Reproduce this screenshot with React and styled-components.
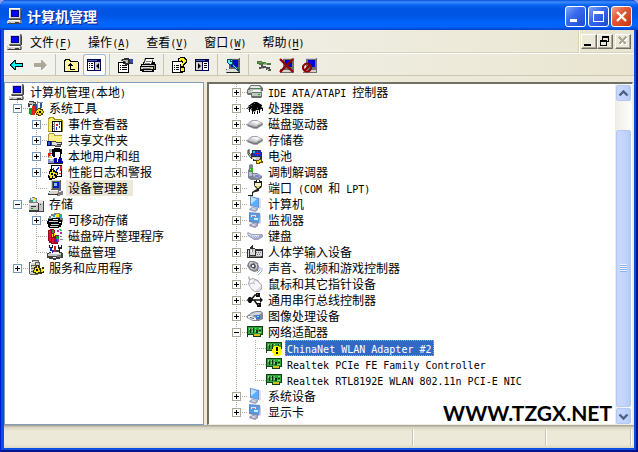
import styled, { createGlobalStyle, css } from "styled-components";

// every glyph is a list of [colour, path, stroke width?] layers on a 16x16 grid
const glyphs = {
  computer: [
    ["#6b6b6b", "M2 0h12l1 1v10h-1v1H3l-1-1z"],
    ["#d6d3ce", "M2 0h11v10H2z"],
    ["#fff", "M2 0h11v1H3v9H2z"],
    ["#000080", "M4 2h8v7H4z"],
    ["#0000ff", "M5 3h6v5H5z"],
    ["#808080", "M1 12h13l1 1v2l-1 1H0v-3z"],
    ["#d6d3ce", "M1 12h12v1H1zM0 13h13v2H0z"],
    ["#fff", "M1 12h12v1H1z"],
    ["#a0a0a0", "M2 14h2v1H2z"],
    ["#404040", "M8 14h4v1H8zM3 11h11v1H3zM14 2h1v9h-1zM1 15h13v1H1z"],
  ],
  back: [
    ["#000", "M1 7h1V6h1V5h1V4h1V3h2v3h7v4H7v3H5v-1H4v-1H3v-1H2V9H1z"],
    ["#00ffff", "M2 8l4-4v3h7v2H6v3z"],
  ],
  forward: [
    ["#fff", "M3 7h7V4h1l5 5-5 5h-1v-3H3z"],
    ["#aca899", "M2 6h7V3h1l5 5-5 5H9v-3H2z"],
  ],
  upFolder: [
    ["#000", "M1 3h1V2h5v1h1v1h7v1h1v10H1z"],
    ["#fff68f", "M2 4h1V3h3v1h1v1h8v9H2z"],
    ["#fffde0", "M3 6h1v1H3zM5 5h1v1H5zM12 6h1v1h-1zM14 7h1v1h-1zM12 9h1v1h-1zM3 9h1v1H3zM3 12h1v1H3zM13 12h1v1h-1z"],
    ["#000", "M7 6h1v1h1v1h1v1H8v3h4v1H7V9H5V8h1V7h1z"],
  ],
  panes: [
    ["#000050", "M1 2h14v12H1z"],
    ["#4060c0", "M2 3h9v1H2z"],
    ["#d6d3ce", "M9 5h5v8H9z"],
    ["#fff", "M2 5h6v8H2z"],
    ["#000", "M3 6h1v1H3zM5 6h2v1H5zM3 8h1v1H3zM5 8h2v1H5zM3 10h1v1H3zM5 10h2v1H5zM13 6v6l-3-3z"],
  ],
  panesRight: [
    ["#000050", "M1 2h14v12H1z"],
    ["#4060c0", "M2 3h9v1H2z"],
    ["#d6d3ce", "M2 5h6v8H2z"],
    ["#fff", "M9 5h5v8H9z"],
    ["#000", "M4 6v6l3-3zM10 6h3v1h-3zM10 8h3v1h-3zM10 10h3v1h-3z"],
  ],
  properties: [
    ["#000", "M1 5h11v11H1z"],
    ["#fff", "M2 6h9v9H2z"],
    ["#000", "M3 8h1v1H3zM5 8h5v1H5zM3 10h1v1H3zM5 10h5v1H5zM3 12h1v1H3zM5 12h5v1H5z"],
    ["#303030", "M5 2h2V1h5v1h4v5h-5v1H8V7H6V6h2V5H6V4H4z"],
    ["#bdbdbd", "M6 3h5v1H6zM8 4h3v2H9z"],
    ["#3050a0", "M13 2h3v4h-3z"],
  ],
  printer: [
    ["#000", "M5 1h9v1h-1v3h2v2h1v6h-2v2H2v-1H0V9h1V7h2V5h1z"],
    ["#fff", "M6 2h7l-2 5H4z"],
    ["#808080", "M6 4h5v1H6zM5 6h5v1H5z"],
    ["#d6d3ce", "M2 8h12v1H2zM1 10h12v2H1zM4 13h8v1H4z"],
    ["#808080", "M14 8h1v4h-1zM3 11h8v1H3z"],
    ["#e0d000", "M10 10h2v1h-2z"],
  ],
  help: [
    ["#000", "M1 4h11v12H1z"],
    ["#fff", "M2 5h9v10H2z"],
    ["#000", "M3 8h1v1H3zM5 8h3v1H5zM3 10h1v1H3zM5 10h3v1H5zM3 12h1v1H3zM5 12h3v1H5z"],
    ["#000", "M7 1h2V0h5v1h1v1h1v4h-1v1h-1v1h-1v2h-4V7h2V5h1V4h-1v1H7z"],
    ["#ffef20", "M8 2h1V1h4v1h1v1h1v2h-1v1h-1v1h-1v2h-2V7h1V6h1V4h-1V3h-1v1H8z"],
    ["#000", "M9 10h5v5H9z"],
    ["#ffef20", "M10 11h3v3h-3z"],
  ],
  scan: [
    ["#606060", "M4 1h11v11H4zM1 12h14v4H1z"],
    ["#e0ded8", "M4 1h10v1H4zM2 12h11v1H2zM1 13h12v2H1z"],
    ["#0000d8", "M6 3h7v7H6z"],
    ["#005060", "M2 2h5v1h1v4h1v1h1v1h1v1h1v1h1v1h1v2h-2v-1h-1v-1h-1v-1h-1v-1H8V8H4V7H3V6H2z"],
    ["#60e8ff", "M3 3h2v2h2v2H4V6H3zM8 8h1v1h1v1h1v1h1v1h-1v-1h-1v-1H9V9H8zM6 3h1v1H6z"],
    ["#202020", "M2 15h13v1H2z"],
  ],
  plug: [
    ["#4c7a3c", "M1 4h5v1h4v1h5v2h-4V7H7v1H3V7H1z"],
    ["#78a060", "M3 5h3v1H3zM8 6h3v1H8z"],
    ["#505050", "M5 8h2v1h3v1h4v2h-3v-1H7v-1H5zM10 11h3v1h2v2h-3v-1h-2zM3 10h5v2H3z"],
    ["#b0b0b0", "M5 11h3v1H5zM7 7h4v1H7zM11 12h2v1h-2z"],
  ],
  uninstall: [
    ["#707070", "M4 1h11v11H4zM1 12h14v4H1z"],
    ["#d6d3ce", "M4 1h10v1H4zM1 13h13v2H1z"],
    ["#0000d0", "M6 3h7v7H6z"],
    ["#900000", "M1 2l13 13M14 2L1 15", 2.4],
  ],
  disable: [
    ["#707070", "M4 1h11v11H4zM1 12h14v4H1z"],
    ["#d6d3ce", "M4 1h10v1H4zM1 13h13v2H1z"],
    ["#0000d0", "M6 3h7v7H6z"],
    ["#900000", "M5 6.500a4 4 0 1 0 .1 0M2.500 13.500l6-6", 2.2],
  ],
  tools: [
    ["#404040", "M0 3h1V1h5v1h2v3H7v2H4V5H2v2H0z"],
    ["#c0c0c0", "M1 2h4v1h2v1H5v2H4V4H1z"],
    ["#00a030", "M1 8h3v7H2v-1H1z"],
    ["#e02020", "M4 6h3v9H4z"],
    ["#3050a0", "M7 4h2v8H7zM12 3h2v5h-2z"],
    ["#909090", "M9 1h1v8H9zM10 2h5v1h-5z"],
    ["#504800", "M8 9h2V8h3v1h2v2h1v2h-1v2h-2v1h-3v-1H8v-2H7v-2h1z"],
    ["#f0d820", "M9 10h1V9h2v1h2v1h1v2h-2v2h-2v-1H9v-1H8v-2h1z"],
    ["#000", "M11 11h2v2h-2zM9 12h1v1H9z"],
  ],
  events: [
    ["#a09020", "M1 2h1V1h5v1h1v1h7v1h1v12H1z"],
    ["#ffef70", "M2 3h1V2h3v1h1v1h7v1H5v10H2z"],
    ["#c0b030", "M1 3h1v12H1z"],
    ["#000", "M5 5h10v11H5z"],
    ["#fff", "M6 6h8v9H6z"],
    ["#808080", "M7 6h1v9H7zM6 8h1v1H6zM6 10h1v1H6zM6 12h1v1H6z"],
    ["#e02020", "M9 8h2v2H9zM12 6h1v3h-1z"],
    ["#0040e0", "M9 11h1v3H9zM12 10h1v2h-1z"],
  ],
  shared: [
    ["#a8a040", "M1 2h1V1h5v1h1v1h7v8H1z"],
    ["#ffef80", "M2 2h5v2h8v7H2z"],
    ["#fffbd0", "M3 5h1v1H3zM6 5h1v1H6zM9 5h1v1H9zM12 5h1v1h-1zM4 7h1v1H4zM8 7h1v1H8zM11 7h1v1h-1zM5 9h1v1H5z"],
    ["#000080", "M0 9h4v5H0z"],
    ["#2060c0", "M1 10h2v3H1z"],
    ["#404040", "M4 9h5v1h6v3h-1v2H8v-1H4z"],
    ["#e0e0e0", "M5 10h4v1h5v1h-4v1H5z"],
    ["#909090", "M8 13h5v1H8z"],
  ],
  users: [
    ["#a0a0a0", "M2 1h5v3H4v6H1V5h1z"],
    ["#000", "M5 1h2V0h6v1h2v5h-1v4h-2V9H6V8H5z"],
    ["#fff", "M8 4h5v5h-2v1H8z"],
    ["#d02020", "M1 5h4v1H3v3H1z"],
    ["#ffe000", "M2 8h3v2H2z"],
    ["#8090d0", "M1 11h6v4H1z"],
    ["#d0d0d0", "M3 11h3v2H3z"],
    ["#0000b0", "M7 10h3v1h2v-1h3v3h1v3H7z"],
    ["#fff", "M10 11h1v3h-1z"],
    ["#202020", "M1 15h15v1H1z"],
  ],
  logs: [
    ["#000", "M4 1h11v12H4z"],
    ["#fff", "M5 2h9v10H5z"],
    ["#0030e0", "M6 4h1v2h1v1h1V5h1V4h1V3h1v2h-1v1h-1v2H8v1H7V8H6z"],
    ["#e02020", "M13 2h2v3h-1v2h-1zM12 9h2v1h-2z"],
    ["#000", "M2 9V7h1V5h3v1h2v2h3v3h-1v3H8v1H5v1H2v-2H1v-3h1z"],
    ["#ffe020", "M3 8h2V6h1v2h2v1h2v2H8v3H6v-2H5v2H3v-2H2v-2h1z"],
    ["#000", "M4 9h2v2H4zM7 10h2v2H7z"],
  ],
  device: [
    ["#606060", "M4 0h10v10H4zM2 11h13v4H1v-2h1z"],
    ["#d6d3ce", "M4 0h9v1H4zM4 1h1v8H4zM3 11h11v1H3zM2 12h11v2H2z"],
    ["#0020d0", "M6 2h6v6H6z"],
    ["#90b8ff", "M7 3h3v3H7z"],
    ["#808080", "M11 10h3v1h2v4h-3v1h-3v-3h1z"],
    ["#fff", "M12 11h2v1h-2z"],
    ["#303030", "M1 14h10v1H1z"],
  ],
  storage: [
    ["#404040", "M1 6h9V5h6v11H1z"],
    ["#808080", "M2 2h2V1h3v1h2v2h1v3H1V4h1z"],
    ["#b8e8ff", "M3 2h4v1h1v3H3z"],
    ["#ffe000", "M5 2h2v2H5z"],
    ["#20b040", "M3 4h2v2H3z"],
    ["#e8e6e0", "M1 7h9v2H1zM9 4h6v2H9zM10 6h5v1h-5z"],
    ["#c8c8c8", "M1 9h9v5H1zM11 7h4v8h-4z"],
    ["#303030", "M3 10h5v1H3zM10 7h1v9h-1zM12 8h1v1h-1z"],
    ["#00a000", "M3 12h2v1H3z"],
  ],
  removable: [
    ["#808080", "M2 4h2V2h3V1h6v1h2v4h1v4h-3v4H2V9H1V6h1z"],
    ["#000", "M1 7h4V6h8v2h2v5h-1v2h-2v1H2v-1H1v-3H0V9h1z"],
    ["#d0f0ff", "M4 4h2V3h3v3H4z"],
    ["#ffe000", "M9 2h3v3H9z"],
    ["#00b0c0", "M12 3h2v3h-2zM6 3h2v2H6z"],
    ["#c8c8c8", "M2 9h9v1H2zM4 12h8v1H4zM3 14h8v1H3z"],
    ["#fff", "M6 7h5v1H6zM12 10h2v1h-2z"],
  ],
  defrag: [
    ["#a00020", "M1 2h2V1h4v1h1v5h4v7h-1v2H4v-1H2v-2H1z"],
    ["#e01030", "M2 3h2v10H2zM5 10h2v5H5z"],
    ["#20a030", "M5 2h2v3H5zM9 8h3v3H9z"],
    ["#ffe020", "M7 5h1v3H7zM5 6h1v3H5z"],
    ["#2030d0", "M4 5h1v3H4zM8 11h2v3H8z"],
    ["#c020c0", "M10 2h2v2h-2zM13 4h2v2h-2zM10 11h2v3h-2z"],
    ["#20c040", "M12 1h2v1h1v1h-2V2h-1z"],
    ["#808080", "M13 8h2v1h-2zM13 11h3v1h-3z"],
  ],
  diskMgmt: [
    ["#404040", "M2 8h3V6h8v2h2v1h1v5h-3v1H9v1H6v-1H2v-1H0V9h2z"],
    ["#c8c8c8", "M2 9h12v3H1v-2h1z"],
    ["#f4f4f4", "M4 8h8v2H4zM6 13h3v1H6z"],
    ["#808080", "M10 11h4v2h-4z"],
    ["#20a030", "M12 11h1v1h-1z"],
    ["#0030c0", "M3 3h2v3h1v3H5V7H3z"],
    ["#d02020", "M7 2h2v6H7z"],
    ["#202020", "M2 1h1v2h2V1h1v3H2zM11 1h1v2h2V1h1v4h-2v4h-1V5h-1z"],
  ],
  services: [
    ["#606060", "M1 2h3V0h7v2h1v12h-2v1H2v-1H1z"],
    ["#d6d3ce", "M2 3h5v11H2zM5 1h5v1H5zM8 3h3v4H8z"],
    ["#fff", "M3 2h4v1H3zM2 3h1v9H2z"],
    ["#606060", "M3 5h4v1H3zM3 8h4v1H3zM3 11h3v1H3z"],
    ["#00b020", "M3 6h1v1H3z"],
    ["#303000", "M6 7h2V5h3v1h1v2h2V7h2v2h-1v2h1v2h-2v1h-2v-1h-1v1H7v-1H5v-3h1z"],
    ["#ffe000", "M7 8h2V6h1v2h1v2h1v2h-2v1H8v-1H6v-2h1zM13 8h1v1h1v3h-2z"],
    ["#000", "M8 9h2v2H8z"],
  ],
  ide: [
    ["#687068", "M4 1h9l3 3v3h-1v6l-1 1H5l-1-1v-2H1l-1-1V6l3-4z"],
    ["#e8ece8", "M4 2h8l2 2H3z"],
    ["#bcc4bc", "M1 6h4v3H1zM3 5h11v1H3z"],
    ["#f0f4f0", "M6 6h7l2 2H4z"],
    ["#c0c8c0", "M5 9h9v3H5z"],
    ["#20a030", "M10 4h2v1h-2zM11 10h2v1h-2z"],
  ],
  cpu: [
    ["#000", "M7 2h3l5 3v1l-1 1 2 1v3h-1V9l-2 0v4h-1v-3h-1v4h-1v-4H9l-1 2v2H7v-2l-1-1v3H5v-4l-2-1v3H2v-4L0 9V8l2-1-1-1z"],
    ["#707070", "M2 6h1v1H2zM4 5h1v1H4zM7 3h1v1H7zM4 8h1v1H4zM10 8h1v1h-1z"],
    ["#a0a0a0", "M1 9h1v1H1zM4 10h1v1H4zM7 11h1v1H7zM10 10h1v1h-1zM13 9h1v1h-1z"],
  ],
  drive: [
    ["#a4a4a8", "M0 8l5-4h5l6 3v2l-6 4H7L0 10z"],
    ["#d4d4d8", "M1 8l5-3h4l5 2-6 3z"],
    ["#f6f6f8", "M4 6l3-1h3l3 1-3 2z"],
    ["#707078", "M1 9l6 2 3 0 5-3v1l-5 3H7l-6-2z"],
    ["#40a040", "M11 9h1v1h-1z"],
  ],
  battery: [
    ["#303030", "M1 2v4l3 4M2 1v4l4 5", 1],
    ["#303030", "M5 2h9v2h1v7h-2v2H6v-2H4V5h1z"],
    ["#c8c8c8", "M5 9h8v3H7v-1H5z"],
    ["#1030d0", "M6 3h8v5H6z"],
    ["#e01020", "M10 3h1v5h-1zM8 5h5v1H8z"],
    ["#00d0f0", "M6 3h2v2H6z"],
    ["#fff", "M6 10h3v1H6z"],
    ["#605000", "M9 12h3v-1h3v2h1v2h-3v1H9z"],
    ["#ffe820", "M10 13h2v-1h2v2h-2v1h-2z"],
  ],
  modem: [
    ["#7c8498", "M2 1l2-1 2 1v8h4l5 3v2l-3 2H4l-3-2V6l1-1z"],
    ["#b8c0d0", "M2 5h3v7H2zM6 10h4l4 2-4 2-4-2z"],
    ["#30b020", "M2 4h4v4H2z"],
    ["#a0ff80", "M3 5h1v1H3z"],
    ["#8080d8", "M8 11h4v2H8z"],
  ],
  port: [
    ["#202020", "M7 1h2V0h1v2h2V0h1v1h2v5l-1 2-2 1v2l-3 1-1 0-2 1v3H1v-1h4v-3l3-2 2-1V9L8 7 7 5z"],
    ["#f4f0d0", "M8 3h6v3H8z"],
    ["#e8d870", "M9 6h4l-1 2h-2z"],
  ],
  monitor: [
    ["#7090c8", "M3 0l9 2v10l-9-2z"],
    ["#58b0ff", "M4 1l7 2v8l-7-2z"],
    ["#b8e4ff", "M4 1l6 2-6 5z"],
    ["#d8dcee", "M12 2l2 1v9l-2 1z"],
    ["#a0a4bc", "M6 11l5 1v2l-3 2-6-2 1-2z"],
    ["#dce0f0", "M6 12l4 1-3 1-3-1z"],
  ],
  display: [
    ["#7088b8", "M2 0l11 1v9l-2 2-9-2z"],
    ["#48a0f0", "M3 1l9 1v7l-2 1-7-2z"],
    ["#d0ecff", "M4 3l5 0v2H4zM7 6h4v2H7z"],
    ["#d07080", "M5 4h3v1H5zM9 3h1v1H9z"],
    ["#c8ccdc", "M13 2l1 1v8l-2 1z"],
    ["#9498b0", "M6 11l5 1v2l-3 2-6-2 1-2z"],
    ["#dce0ec", "M6 12l4 1-3 1-3-1z"],
  ],
  keyboard: [
    ["#a0a4c8", "M0 5l1-1 4 2 10 0 1 1v2l-5 3H7L1 8z"],
    ["#dcdef0", "M1 5l4 2h9l-4 3H7L2 7z"],
    ["#9ca0c4", "M4 7h1v1H4zM6 8h1v1H6zM8 8h1v1H8zM10 8h1v1h-1zM7 9h1v1H7zM9 9h1v1H9zM12 7h1v1h-1z"],
  ],
  hid: [
    ["#303030", "M0 5h3V3h1V2h1V1h1v3h2v1h8v9H0z"],
    ["#d8d8d8", "M3 5h5v6H3zM1 6h1v7H1zM9 7h6v5H9z"],
    ["#fff", "M4 6h2v2H4z"],
    ["#808080", "M5 5h1v3H5zM9 8h1v1H9zM11 8h1v1h-1zM13 8h1v1h-1zM10 10h1v1h-1zM12 10h1v1h-1zM3 12h11v1H3z"],
  ],
  sound: [
    ["#808088", "M3 1h4l4 2 1 4-1 4-4 1-4-2-3-4 1-3z"],
    ["#d0d0d8", "M3 2h3l4 2 0 4-2 2-4-1-2-4z"],
    ["#505058", "M4 4l3-1 2 3-1 3-3-1-2-2z"],
    ["#f0f0f8", "M5 5h2v2H5z"],
    ["#a0a8f0", "M13 7l0 3-3 3M15 8v3l-4 4", 1],
  ],
  mouse: [
    ["#a8a8b0", "M2 0l1 3 3-1 5 2 4 5v4l-3 3H8l-4-3-3-5 1-4-1-3z"],
    ["#f6f6fa", "M3 4l3-1 4 2 4 4v3l-2 3H8l-4-3-2-4z"],
    ["#b8b8c0", "M8 4l-2 3-4 1M6 7l2 1", 1],
    ["#dcdce4", "M9 14l5-4v2l-2 3H9z"],
  ],
  usb: [
    ["#101010", "M3 8h10M4 8l4-5h3M7 8l3 4h2", 1.4],
    ["#101010", "M0 8l2-3h2l2 3-2 3H2zM9 1h4v4H9zM13 5l3 3-3 3zM10 11h4v4h-4z"],
    ["#808080", "M10 2h1v1h-1zM11 12h1v1h-1z"],
  ],
  camera: [
    ["#808890", "M1 7l4-3 4-1h5l2 2v6l-4 2H6L0 10V8z"],
    ["#d0d6e0", "M2 7l4-2 3-1h4l2 1-3 2H7l-2 1z"],
    ["#eef2f6", "M1 8h4l4 2v2H6l-5-2z"],
    ["#3878c8", "M9 7h4v4H9z"],
    ["#a0d8ff", "M10 8h2v1h-2z"],
    ["#505860", "M3 9l4 1v1L3 10z"],
  ],
  nic: [
    ["#104010", "M0 2h16v9h-2v2H6v-2H1v2H0z"],
    ["#30a03c", "M1 3h14v7H1z"],
    ["#90d890", "M2 4h1v2H2zM5 4h1v1H5zM8 4h1v1H8zM12 4h2v1h-2zM11 8h3v1h-3z"],
    ["#083808", "M3 5h1v4H3zM6 4h1v5H6zM9 6h2v3H9zM12 6h2v1h-2z"],
    ["#b0b8b0", "M5 6h1v2H5zM8 6h1v2H8z"],
    ["#d0c020", "M7 10h6v2H7z"],
  ],
  nicWarn: [
    ["#104010", "M0 2h16v9H1v2H0z"],
    ["#30a03c", "M1 3h14v7H1z"],
    ["#90d890", "M2 4h1v2H2zM5 4h1v1H5zM8 4h1v1H8zM12 4h2v1h-2z"],
    ["#083808", "M3 5h1v4H3zM6 4h1v5H6zM12 4h1v2h-1z"],
    ["#ffff00", "M8 6h5v1h2v2h1v4h-1v2h-2v1H8v-1H7v-2H6V9h1V7h1z"],
    ["#000", "M10 7h2v4h-2zM10 12h2v2h-2z"],
  ],
};

const Icon = ({ name }) => (
  <Glyph viewBox="0 0 16 16" aria-hidden="true">
    {glyphs[name].map(([color, d, width], i) => (
      <path
        key={i}
        d={d}
        fill={width ? "none" : color}
        stroke={width ? color : "none"}
        strokeWidth={width}
      />
    ))}
  </Glyph>
);

// latin runs are set smaller so that two letters take the width of one hanzi
const Mixed = ({ children }) =>
  children
    .split(/([ -~]+)/)
    .filter(Boolean)
    .map((part, i) => (/[ -~]/.test(part) ? <Latin key={i}>{part}</Latin> : part));

const menus = [
  ["文件", "F"],
  ["操作", "A"],
  ["查看", "V"],
  ["窗口", "W"],
  ["帮助", "H"],
];

const tools = [
  [["back", "后退"], ["forward", "前进"]],
  [["upFolder", "向上"], ["panes", "显示/隐藏控制台树", true]],
  [["properties", "属性"], ["printer", "打印"]],
  [["help", "帮助"], ["panesRight", "显示/隐藏操作窗格"]],
  [["scan", "扫描检测硬件改动"]],
  [["plug", "更新驱动程序"], ["uninstall", "卸载"], ["disable", "停用"]],
];

// guides: one entry per column left of the icon
// "line" passes through, "tee" and "end" join the row, "plus"/"minus" add a box
const consoleTree = [
  { icon: "computer", label: "计算机管理(本地)", guides: [] },
  { icon: "tools", label: "系统工具", guides: ["minus"] },
  { icon: "events", label: "事件查看器", guides: ["line", "plus"] },
  { icon: "shared", label: "共享文件夹", guides: ["line", "plus"] },
  { icon: "users", label: "本地用户和组", guides: ["line", "plus"] },
  { icon: "logs", label: "性能日志和警报", guides: ["line", "plus"] },
  { icon: "device", label: "设备管理器", guides: ["line", "end"], state: "inactive" },
  { icon: "storage", label: "存储", guides: ["minus"] },
  { icon: "removable", label: "可移动存储", guides: ["line", "plus"] },
  { icon: "defrag", label: "磁盘碎片整理程序", guides: ["line", "tee"] },
  { icon: "diskMgmt", label: "磁盘管理", guides: ["line", "end"] },
  { icon: "services", label: "服务和应用程序", guides: ["plus"], last: true },
];

const deviceTree = [
  { icon: "ide", label: "IDE ATA/ATAPI 控制器", guides: ["plus"] },
  { icon: "cpu", label: "处理器", guides: ["plus"] },
  { icon: "drive", label: "磁盘驱动器", guides: ["plus"] },
  { icon: "drive", label: "存储卷", guides: ["plus"] },
  { icon: "battery", label: "电池", guides: ["plus"] },
  { icon: "modem", label: "调制解调器", guides: ["plus"] },
  { icon: "port", label: "端口 (COM 和 LPT)", guides: ["plus"] },
  { icon: "monitor", label: "计算机", guides: ["plus"] },
  { icon: "display", label: "监视器", guides: ["plus"] },
  { icon: "keyboard", label: "键盘", guides: ["plus"] },
  { icon: "hid", label: "人体学输入设备", guides: ["plus"] },
  { icon: "sound", label: "声音、视频和游戏控制器", guides: ["plus"] },
  { icon: "mouse", label: "鼠标和其它指针设备", guides: ["plus"] },
  { icon: "usb", label: "通用串行总线控制器", guides: ["plus"] },
  { icon: "camera", label: "图像处理设备", guides: ["plus"] },
  { icon: "nic", label: "网络适配器", guides: ["minus"] },
  { icon: "nicWarn", label: "ChinaNet WLAN Adapter #2", guides: ["line", "tee"], state: "active" },
  { icon: "nic", label: "Realtek PCIe FE Family Controller", guides: ["line", "tee"] },
  { icon: "nic", label: "Realtek RTL8192E WLAN 802.11n PCI-E NIC", guides: ["line", "end"] },
  { icon: "monitor", label: "系统设备", guides: ["plus"] },
  { icon: "display", label: "显示卡", guides: ["plus"], last: true },
];

const Guide = ({ kind, color, short }) => {
  const boxed = kind === "plus" || kind === "minus";
  return (
    <GuideSvg viewBox="0 0 19 16" aria-hidden="true">
      <path
        d={kind === "end" || short ? "M8.5 0V9" : "M8.5 0V16"}
        stroke="#aca899"
        strokeDasharray="1 1"
      />
      {kind !== "line" && <path d="M8 8.5H19" stroke="#aca899" strokeDasharray="1 1" />}
      {boxed && (
        <>
          <rect x="4.5" y="4.5" width="8" height="8" fill="#fff" stroke={color} />
          <path d={kind === "plus" ? "M6 8.5h5M8.5 6v5" : "M6 8.5h5"} stroke="#000" />
        </>
      )}
    </GuideSvg>
  );
};

const Tree = ({ items, label, boxColor, $indent }) => (
  <TreeList aria-label={label} $indent={$indent}>
    {items.map((item) => (
      <TreeRow key={item.label}>
        {item.guides.map((kind, i) => (
          <Guide key={i} kind={kind} color={boxColor} short={item.last} />
        ))}
        <Icon name={item.icon} />
        <TreeLabel $state={item.state}>
          <Mixed>{item.label}</Mixed>
        </TreeLabel>
      </TreeRow>
    ))}
  </TreeList>
);

const App = () => (
  <>
    <GlobalStyle />
    <Frame>
      <TitleBar>
        <Icon name="computer" />
        <Title>计算机管理</Title>
        <CaptionButton aria-label="最小化">
          <svg viewBox="0 0 19 19"><path d="M4 12h7v3H4z" fill="#fff" /></svg>
        </CaptionButton>
        <CaptionButton aria-label="最大化">
          <svg viewBox="0 0 19 19"><path d="M4 4h11v11H4zM5 7v7h9V7z" fill="#fff" fillRule="evenodd" /></svg>
        </CaptionButton>
        <CaptionButton aria-label="关闭" $close>
          <svg viewBox="0 0 19 19"><path d="M5 5l9 9M14 5l-9 9" stroke="#fff" strokeWidth="2.4" /></svg>
        </CaptionButton>
      </TitleBar>

      <Client>
        <MenuBar>
          <Icon name="computer" />
          <MenuList>
            {menus.map(([name, key]) => (
              <MenuButton key={key}>
                {name}
                <Latin>
                  (<u>{key}</u>)
                </Latin>
              </MenuButton>
            ))}
          </MenuList>
          <ChildControls>
            <ChildButton aria-label="最小化子窗口">
              <svg viewBox="0 0 13 12"><path d="M2 9h7v2H2z" /></svg>
            </ChildButton>
            <ChildButton aria-label="还原子窗口">
              <svg viewBox="0 0 13 12">
                <path d="M4 1h7v6H9v4H2V5h2zM5 3v2h4v1h1V3zM3 7v3h5V7z" fillRule="evenodd" />
              </svg>
            </ChildButton>
            <ChildButton aria-label="关闭子窗口" $apart disabled>
              <svg viewBox="0 0 13 12">
                <path d="M4 3l7 7M11 3l-7 7" stroke="#fff" strokeWidth="2" />
                <path d="M3 2l7 7M10 2L3 9" stroke="#aca899" strokeWidth="2" />
              </svg>
            </ChildButton>
          </ChildControls>
        </MenuBar>

        <Toolbar>
          {tools.map((group, i) => (
            <ToolGroup key={i}>
              {group.map(([icon, label, pressed]) => (
                <ToolButton key={icon} aria-label={label} $pressed={pressed}>
                  <Icon name={icon} />
                </ToolButton>
              ))}
            </ToolGroup>
          ))}
        </Toolbar>

        <Panes>
          <ConsolePane>
            <Tree items={consoleTree} label="控制台树" boxColor="#7898b5" $indent={4} />
          </ConsolePane>
          <DetailPane>
            <Tree items={deviceTree} label="设备" boxColor="#aca899" $indent={19} />
            <ScrollBar>
              <ScrollButton aria-label="向上滚动">
                <svg viewBox="0 0 13 13"><path d="M2.5 8.5l4-4 4 4" /></svg>
              </ScrollButton>
              <ScrollGap />
              <ScrollThumb>
                <Grip />
              </ScrollThumb>
              <ScrollButton aria-label="向下滚动">
                <svg viewBox="0 0 13 13"><path d="M2.5 4.5l4 4 4-4" /></svg>
              </ScrollButton>
            </ScrollBar>
            <Watermark>WWW.TZGX.NET</Watermark>
          </DetailPane>
        </Panes>

        <StatusBar>
          <StatusCell $grow />
          <StatusCell $width={133} />
          <StatusCell $width={85} />
        </StatusBar>
      </Client>
    </Frame>
  </>
);

const GlobalStyle = createGlobalStyle`
  * {
    box-sizing: border-box;
  }

  body {
    margin: 0;
    background: #8f9ee8;
    color: #000;
    font: 12px/16px "Noto Sans CJK SC", sans-serif;
  }

  button {
    padding: 0;
    border: 0;
    background: none;
    color: inherit;
    font: inherit;
  }
`;

const Latin = styled.span`
  font-family: "DejaVu Sans Mono", monospace;
  font-size: 10px;
  line-height: 1;
  white-space: pre;
`;

const Glyph = styled.svg`
  flex: none;
  display: block;
  width: 16px;
  height: 16px;
`;

const Frame = styled.main`
  display: flex;
  flex-direction: column;
  min-height: 100vh;
  padding: 0 4px 4px;
  overflow: hidden;
  background: #0a50e0;
  border-radius: 7px 7px 0 0;
  box-shadow: inset 1px 0 #0019cf, inset -2px 0 #00138c, inset 0 -2px #00138c;
`;

const TitleBar = styled.header`
  display: flex;
  align-items: center;
  gap: 2px;
  height: 30px;
  margin: 0 -4px;
  padding: 2px 6px 0 7px;
  background: linear-gradient(
    #0a4fd8 0,
    #3c8cff 2px,
    #0a64f0 5px,
    #0054e3 9px,
    #0055e5 16px,
    #0066ff 23px,
    #0062f8 27px,
    #0040c8 30px
  );
`;

const Title = styled.h1`
  flex: 1;
  margin: 0 2px;
  color: #fff;
  font-size: 14px;
  font-weight: 700;
  line-height: 20px;
  text-shadow: 1px 1px #0a1883;
`;

const CaptionButton = styled.button`
  width: 21px;
  height: 21px;
  border: 1px solid #fff;
  border-radius: 3px;
  background: ${({ $close }) =>
    $close
      ? "linear-gradient(135deg, #f0a088, #e35a36 40%, #c83410)"
      : "linear-gradient(135deg, #7fa5f8, #3a6cee 40%, #1c48d0)"};

  svg {
    display: block;
  }
`;

const Client = styled.div`
  flex: 1;
  display: flex;
  flex-direction: column;
  background: #ece9d8;
`;

const barFill = css`
  background: linear-gradient(90deg, #f3f3ef, #ece9d8 80%, #e8e4cf);
`;

const MenuBar = styled.div`
  ${barFill}
  display: flex;
  align-items: center;
  height: 24px;
  padding-left: 3px;
  border-bottom: 1px solid #fff;
  box-shadow: inset 0 -1px #d8d2bd;
`;

const MenuList = styled.nav`
  flex: 1;
  display: flex;
`;

const MenuButton = styled.button`
  padding: 0 8px;
  white-space: nowrap;

  &:first-child {
    padding-left: 7px;
  }

  u {
    text-underline-offset: 2px;
  }
`;

const ChildControls = styled.div`
  align-self: stretch;
  display: flex;
  align-items: center;
  padding: 0 3px 1px 2px;
  border-left: 1px solid #d8d2bd;
  box-shadow: inset 1px 0 #fff;
`;

const ChildButton = styled.button`
  width: 16px;
  height: 15px;
  margin-left: ${({ $apart }) => ($apart ? "2px" : 0)};
  border: 1px solid;
  border-color: #fff #716f64 #716f64 #fff;
  background: #ece9d8;
  box-shadow: inset -1px -1px #aca899;

  svg {
    display: block;
    width: 13px;
    height: 12px;
    shape-rendering: crispEdges;
  }
`;

const Toolbar = styled.div`
  ${barFill}
  display: flex;
  align-items: center;
  height: 22px;
  padding-left: 2px;
  border-bottom: 1px solid #ccc6b2;
`;

const ToolGroup = styled.div`
  display: flex;

  & + & {
    padding-left: 4px;
    margin-left: 3px;
    border-left: 1px solid #c9c5b2;
  }
`;

const ToolButton = styled.button`
  display: flex;
  align-items: center;
  width: 23px;
  height: 22px;
  padding-left: 3px;
  border-radius: 3px;

  ${({ $pressed }) =>
    $pressed &&
    css`
      background: #fff;
      box-shadow: inset 0 0 0 1px #98b5d8;
    `}
`;

const Panes = styled.div`
  flex: 1;
  display: grid;
  grid-template-columns: 200px 1fr;
  gap: 3px;
  padding: 6px 1px 0 0;
`;

const ConsolePane = styled.section`
  border: 1px solid #7f9db9;
  padding-top: 1px;
  background: #fff;
`;

const DetailPane = styled.section`
  position: relative;
  display: flex;
  border: solid;
  border-width: 2px 1px 1px 2px;
  border-color: #716f64 #f1efe2 #f1efe2 #716f64;
  background: #fff;
`;

const TreeList = styled.ul`
  flex: 1;
  margin: 0;
  padding: ${({ $indent }) => `0 0 4px ${$indent}px`};
  list-style: none;
`;

const TreeRow = styled.li`
  display: flex;
  align-items: center;
  height: 16px;
`;

const GuideSvg = styled.svg`
  flex: none;
  display: block;
  width: 19px;
  height: 16px;
  shape-rendering: crispEdges;
`;

const TreeLabel = styled.span`
  height: 16px;
  margin-left: 3px;
  padding: 0 2px;
  white-space: nowrap;

  ${({ $state }) =>
    $state === "inactive" &&
    css`
      padding-right: 5px;
      background: #ece9d8;
    `}

  ${({ $state }) =>
    $state === "active" &&
    css`
      background: #316ac5;
      color: #fff;
      outline: 1px dotted #d8a050;
      outline-offset: -1px;
    `}
`;

const ScrollBar = styled.div`
  display: flex;
  flex-direction: column;
  gap: 1px;
  width: 17px;
  padding: 1px 1px 0;
  background: linear-gradient(90deg, #eeede5, #fefefb);
`;

const scrollPiece = css`
  border: 1px solid #b4c8f6;
  border-radius: 2px;
  background: linear-gradient(90deg, #c9d8fc, #c3d3fd 60%, #b2cbf9);
`;

const ScrollButton = styled.button`
  ${scrollPiece}
  width: 15px;
  height: 16px;

  svg {
    display: block;
    width: 13px;
    fill: none;
    stroke: #4d6185;
    stroke-width: 2.4;
  }
`;

const ScrollGap = styled.div`
  flex: 27;
`;

const ScrollThumb = styled.div`
  ${scrollPiece}
  flex: 278;
  display: grid;
  place-items: center;
`;

const Grip = styled.span`
  width: 7px;
  height: 8px;
  background: repeating-linear-gradient(#eef4fe 0 1px, #8cb0f8 1px 2px);
`;

const Watermark = styled.strong`
  position: absolute;
  right: 20px;
  bottom: 0;
  font: 700 21px/22px Lato, sans-serif;
`;

const StatusBar = styled.footer`
  display: flex;
  height: 23px;
  padding: 4px 2px 2px 0;
  background: linear-gradient(#aca899 1px, #d6d2bf 2px, #ece9d8 6px, #ece9d8 19px, #dcd8c6);
`;

const StatusCell = styled.div`
  flex: ${({ $grow }) => ($grow ? 1 : "none")};
  width: ${({ $width }) => ($width ? `${$width}px` : "auto")};
  border-right: 1px solid #fff;
  box-shadow: inset -1px 0 #c9c5b2;
`;

export default App;
